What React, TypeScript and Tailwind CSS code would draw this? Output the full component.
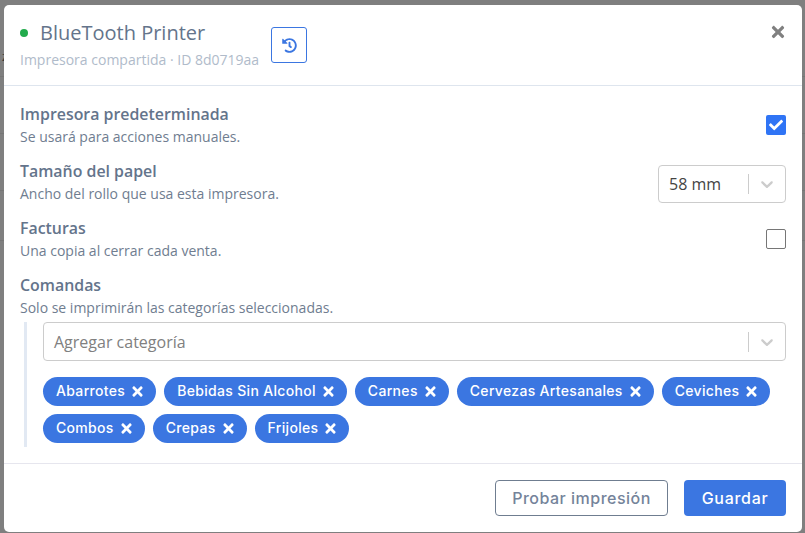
import { FaCheck, FaHistory, FaTimes } from "react-icons/fa";

const chips = [
  ["Abarrotes", "Bebidas Sin Alcohol", "Carnes", "Cervezas Artesanales", "Ceviches"],
  ["Combos", "Crepas", "Frijoles"],
];
const chipFont = "font-['Inter',sans-serif]";

function Chevron() {
  return (
    <svg viewBox="0 0 20 20" width="20" height="20" className="mx-[8px] fill-[#cccccc]">
      <path d="M4.516 7.548c0.436-0.446 1.043-0.481 1.576 0l3.908 3.747 3.908-3.747c0.533-0.481 1.141-0.446 1.574 0 0.436 0.445 0.408 1.197 0 1.615-0.406 0.418-4.695 4.502-4.695 4.502-0.217 0.223-0.502 0.335-0.787 0.335s-0.57-0.112-0.789-0.335c0 0-4.287-4.084-4.695-4.502s-0.436-1.17 0-1.615z" />
    </svg>
  );
}

function Chip({ label }: { label: string }) {
  return (
    <span className={`flex h-[29px] items-center gap-[5px] rounded-full bg-[#3b76e1] pl-[13px] pr-[11px] text-[14px] font-medium tracking-[0.32px] text-white ${chipFont}`}>
      <span className="-mt-[2px]">{label}</span>
      <FaTimes size={15} />
    </span>
  );
}

function Text({ title, sub }: { title: string; sub: string }) {
  return (
    <div>
      <div className="text-[15.9px] font-semibold leading-[24px] text-[#64748b]">{title}</div>
      <div className="text-[14px] leading-[22px] text-[#6f7d90]">{sub}</div>
    </div>
  );
}

function Row({ title, sub, children }: { title: string; sub: string; children?: React.ReactNode }) {
  return (
    <div className="flex h-[46px] items-center justify-between">
      <Text title={title} sub={sub} />
      {children}
    </div>
  );
}

export default function App() {
  return (
    <div className="relative flex h-[533px] w-[805px] overflow-hidden bg-[#7f7f7f] pb-px pl-[4px] pr-[3px] pt-[5px] font-['Open_Sans',sans-serif]">
      <span className="absolute left-[2px] top-[49px] text-[12px] leading-[16px] text-[#333333]">z</span>
      {[76, 133, 190, 240].map((y) => (
        <span key={y} className="absolute left-0 h-px w-full bg-[#767676]" style={{ top: y }} />
      ))}
      <div className="relative flex min-w-0 flex-1 flex-col rounded-[5px] bg-white">
        <div className="flex h-[81px] items-start justify-between border-b border-[#dee5ee] pl-[16px] pr-[15px]">
          <div className="flex items-start">
            <div>
              <div className="mt-[13px] flex h-[30px] items-center">
                <span className="mr-[12px] h-[8px] w-[8px] rounded-full bg-[#22ab4c]" />
                <span className="text-[20px] leading-[30px] text-[#64748b]">BlueTooth Printer</span>
              </div>
              <div className="mt-[3px] text-[14px] leading-[18px] text-[#b0bbca]">Impresora compartida · ID 8d0719aa</div>
            </div>
            <button className="ml-[12px] mt-[22px] flex h-[36px] w-[36px] items-center justify-center rounded-[3px] border border-[#3b76e1] text-[#3b76e1]">
              <FaHistory size={15} />
            </button>
          </div>
          <FaTimes className="mt-[18px] text-[#808080]" size={18} />
        </div>

        <div className="flex flex-1 flex-col px-[16px] pt-[16px]">
          <div className="flex flex-col gap-[11px]">
            <Row title="Impresora predeterminada" sub="Se usará para acciones manuales.">
              <span className="flex h-[20px] w-[20px] items-center justify-center rounded-[2px] bg-[#2f74f5] text-white">
                <FaCheck size={14} />
              </span>
            </Row>
            <Row title="Tamaño del papel" sub="Ancho del rollo que usa esta impresora.">
              <div className="mt-[3px] flex h-[38px] w-[128px] items-center rounded-[4px] border border-[#cccccc] bg-white pl-[10px]">
                <span className="flex-1 text-[16px] text-[#444444]">58 mm</span>
                <span className="h-[20px] w-px bg-[#cccccc]" />
                <Chevron />
              </div>
            </Row>
            <Row title="Facturas" sub="Una copia al cerrar cada venta.">
              <span className="h-[20px] w-[20px] rounded-[2px] border border-[#767676] bg-white" />
            </Row>
            <Text title="Comandas" sub="Solo se imprimirán las categorías seleccionadas." />
          </div>
          <div className="ml-[4px] mt-[3px] flex flex-col gap-[16px] border-l-[3px] border-[#e2e9f3] pb-[4px] pl-[16px]">
            <div className="flex h-[39px] items-center rounded-[4px] border border-[#cccccc] bg-white pl-[10px]">
              <span className="flex-1 text-[16px] text-[#808080]">Agregar categoría</span>
              <span className="h-[20px] w-px bg-[#cccccc]" />
              <Chevron />
            </div>
            <div className="flex flex-col gap-[8px]">
              {chips.map((row) => (
                <div key={row[0]} className="flex gap-[8px]">
                  {row.map((c) => (
                    <Chip key={c} label={c} />
                  ))}
                </div>
              ))}
            </div>
          </div>
        </div>

        <div className="flex h-[69px] items-center justify-end gap-[16px] border-t border-[#e6e6ee] pr-[16px]">
          <button className={`flex h-[36px] w-[173px] items-center justify-center rounded-[4px] border border-[#6f7d90] text-[16px] font-medium tracking-[0.5px] text-[#74839a] ${chipFont}`}>
            Probar impresión
          </button>
          <button className={`flex h-[36px] w-[102px] items-center justify-center rounded-[4px] bg-[#3b76e1] text-[16px] font-medium tracking-[0.7px] text-white ${chipFont}`}>
            Guardar
          </button>
        </div>
      </div>
    </div>
  );
}
